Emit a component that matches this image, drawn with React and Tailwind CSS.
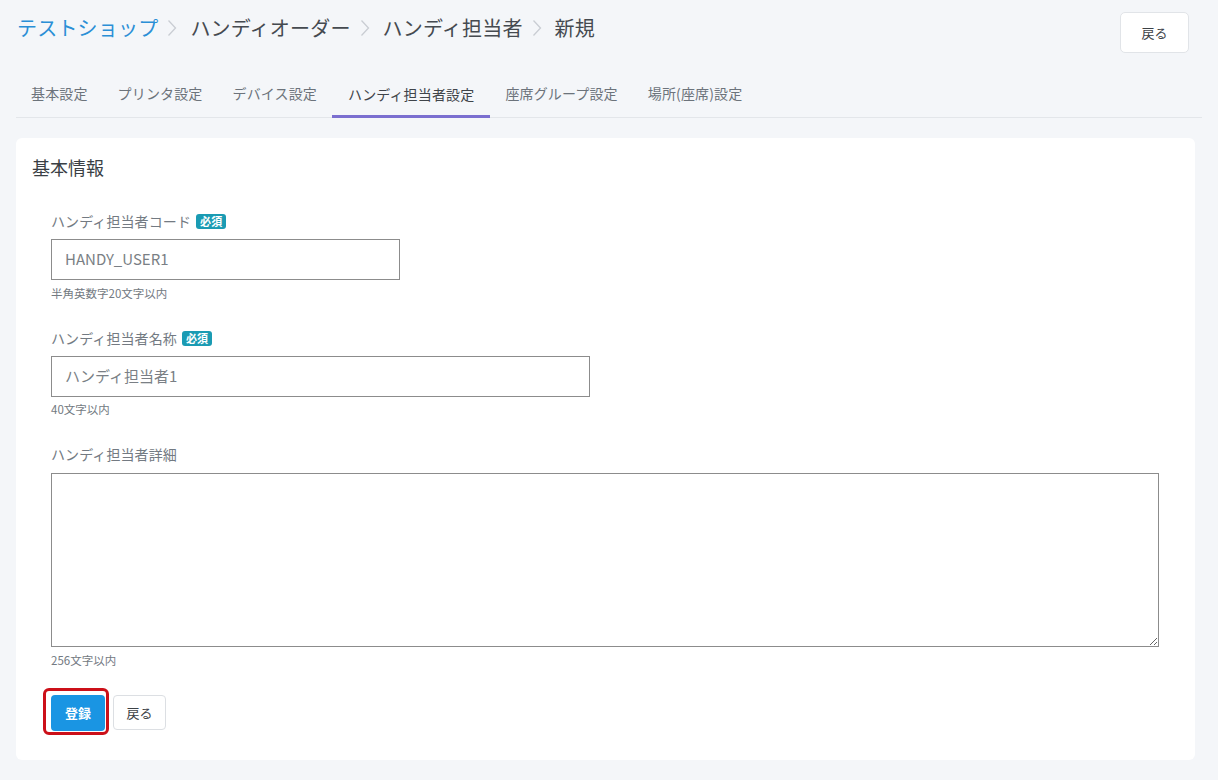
import React from "react";

const Chevron = () => (
  <svg width="10" height="18" viewBox="0 0 10 18" className="ml-[9px] mr-[13px] shrink-0">
    <path d="M1.5 1.5 L8.5 9 L1.5 16.5" fill="none" stroke="#c9cdd3" strokeWidth="1.3" />
  </svg>
);

const tabs = ["基本設定", "プリンタ設定", "デバイス設定", "ハンディ担当者設定", "座席グループ設定", "場所(座席)設定"];

const Badge = () => (
  <span className="ml-[5px] inline-flex h-[15px] items-center rounded-[3px] bg-[#1a9bb3] px-[4px] text-[11px] font-bold leading-none text-white">
    必須
  </span>
);

export default function App() {
  return (
    <div
      className="min-h-screen bg-[#f4f6f9] px-4 pb-5"
      style={{ fontFamily: '"Noto Sans CJK JP", "Noto Sans", sans-serif' }}
    >
      {/* header */}
      <div className="flex items-start justify-between pt-[12px]">
        <div className="flex items-center pl-[1px] pt-[2px] text-[20px] leading-[28px] tracking-[0.2px]">
          <span className="text-[#2b8fd6]">テストショップ</span>
          <Chevron />
          <span className="text-[#454a50]">ハンディオーダー</span>
          <Chevron />
          <span className="text-[#454a50]">ハンディ担当者</span>
          <Chevron />
          <span className="text-[#454a50]">新規</span>
        </div>
        <button className="mr-[13px] h-[41px] w-[69px] rounded-[5px] border border-[#e1e4e8] bg-white text-[13px] text-[#3c4146]">
          戻る
        </button>
      </div>

      {/* tabs */}
      <div className="mt-[17px] flex border-b border-[#e3e6ea]">
        {tabs.map((t, i) => (
          <div
            key={t}
            className={
              i === 3
                ? "-mb-px flex h-[48px] items-center border-b-[3px] border-[#7b6fd0] px-4 pt-[3px] text-[14px] tracking-[0.15px] text-[#3f444a]"
                : "flex h-[47px] items-center px-[15px] text-[14px] tracking-[0.15px] text-[#6c737b]"
            }
          >
            {t}
          </div>
        ))}
      </div>

      {/* card */}
      <div className="mr-[7px] mt-[20px] rounded-[6px] bg-white pb-[29px] pt-[16px]">
        <div className="px-4 text-[18px] leading-[26px] text-[#3a3f45]">基本情報</div>

        <div className="mt-[31px] pl-[35px] pr-[36px]">
          {/* field 1 */}
          <div className="mb-[27px]">
            <div className="flex items-center text-[14px] leading-[20px] tracking-[0.1px] text-[#737a82]">
              ハンディ担当者コード
              <Badge />
            </div>
            <div className="mt-[8px] flex h-[41px] w-[349px] items-center border border-[#8c8c8c] pl-[13px] text-[15px] text-[#7a7f85]">
              HANDY_USER1
            </div>
            <div className="mt-[5px] text-[11.5px] leading-[16px] text-[#737a82]">半角英数字20文字以内</div>
          </div>

          {/* field 2 */}
          <div className="mb-[27px]">
            <div className="flex items-center text-[14px] leading-[20px] tracking-[0.1px] text-[#737a82]">
              ハンディ担当者名称
              <Badge />
            </div>
            <div className="mt-[8px] flex h-[41px] w-[539px] items-center border border-[#8c8c8c] pl-[13px] text-[15px] text-[#7a7f85]">
              ハンディ担当者1
            </div>
            <div className="mt-[4px] text-[11.5px] leading-[16px] text-[#737a82]">40文字以内</div>
          </div>

          {/* field 3 */}
          <div className="mb-[27px]">
            <div className="text-[14px] leading-[20px] tracking-[0.1px] text-[#737a82]">ハンディ担当者詳細</div>
            <textarea className="mt-[9px] block h-[174px] w-full border border-[#8c8c8c] bg-white outline-none" />
            <div className="mt-[5px] text-[11.5px] leading-[16px] text-[#737a82]">256文字以内</div>
          </div>

          {/* buttons */}
          <div className="flex items-start gap-[8px]">
            <div className="relative">
              <button className="h-[36px] w-[54px] rounded-[4px] bg-[#1a95e3] text-[13px] font-bold text-white">
                登録
              </button>
              <span className="pointer-events-none absolute -bottom-[4px] -left-[8px] -right-[4px] -top-[7px] rounded-[6px] border-[3px] border-[#cc1019]" />
            </div>
            <button className="h-[35px] w-[53px] rounded-[4px] border border-[#dcdfe3] bg-white text-[13px] text-[#3c4146]">
              戻る
            </button>
          </div>
        </div>
      </div>
    </div>
  );
}
